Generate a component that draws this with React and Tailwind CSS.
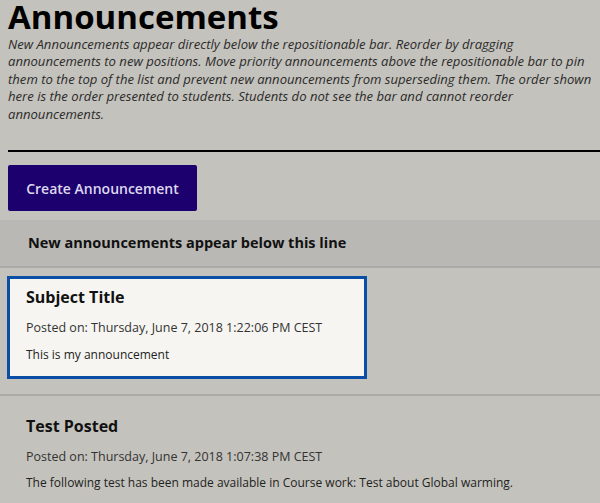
export default function App() {
  return (
    <div className="min-h-[503px] w-[600px] overflow-hidden bg-[#c4c2bc] font-['Open_Sans',sans-serif] text-[#1a1a1a]">
      <div className="pl-2">
        <h1 className="text-[33px] leading-[34px] font-bold text-black">Announcements</h1>
        <p className="mt-[2px] text-[13.1px] leading-[17.4px] italic text-[#2b2b2b] whitespace-nowrap">
          New Announcements appear directly below the repositionable bar. Reorder by dragging<br />
          announcements to new positions. Move priority announcements above the repositionable bar to pin<br />
          them to the top of the list and prevent new announcements from superseding them. The order shown<br />
          here is the order presented to students. Students do not see the bar and cannot reorder<br />
          announcements.
        </p>
        <div className="mt-[27px] h-[2px] bg-black" />
        <button className="mt-[13px] flex h-[46px] w-[189px] items-center justify-center rounded-[2px] bg-[#1c006e] text-[14px] font-semibold text-[#ddd8ee]">
          Create Announcement
        </button>
      </div>
      <div className="mt-[9px] flex h-[48px] items-center border-b-2 border-[#abaaa6] bg-[#b9b8b4] pl-[28px]">
        <span className="text-[14.5px] leading-[20px] font-bold text-[#111]">New announcements appear below this line</span>
      </div>
      <div className="ml-[7px] mt-[8px] w-[360px] border-[3px] border-[#0b4ea6] bg-[#f6f5f1] pl-[16px] pt-[8px] pb-[13px]">
        <div className="text-[16px] leading-[20px] font-bold text-[#111]">Subject Title</div>
        <div className="mt-[12px] text-[12.5px] leading-[18px] text-[#333]">Posted on: Thursday, June 7, 2018 1:22:06 PM CEST</div>
        <div className="mt-[10px] text-[12px] leading-[16px] text-[#222]">This is my announcement</div>
      </div>
      <div className="mt-[15px] h-[2px] bg-[#abaaa6]" />
      <div className="pl-[26px] pt-[20px]">
        <div className="text-[16px] leading-[20px] font-bold text-[#111]">Test Posted</div>
        <div className="mt-[12px] text-[12.5px] leading-[18px] text-[#333]">Posted on: Thursday, June 7, 2018 1:07:38 PM CEST</div>
        <div className="mt-[9px] text-[12px] leading-[16px] text-[#222]">The following test has been made available in Course work: Test about Global warming.</div>
      </div>
    </div>
  );
}
